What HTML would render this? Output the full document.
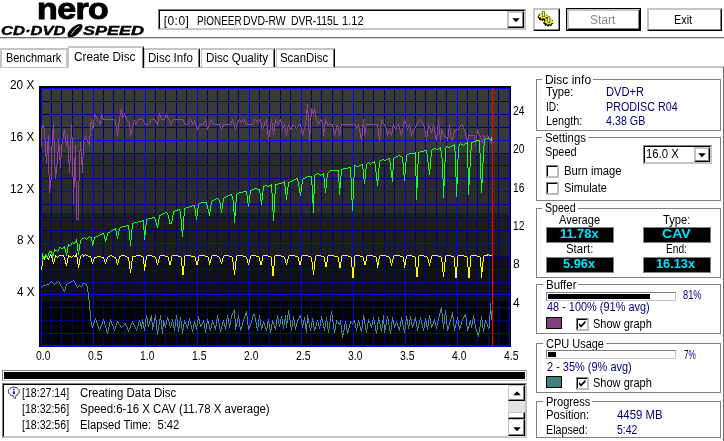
<!DOCTYPE html>
<html><head><meta charset="utf-8"><title>Nero CD-DVD Speed</title>
<style>
html,body{margin:0;padding:0;background:#fff;}
body{will-change:transform;width:724px;height:441px;position:relative;overflow:hidden;font-family:"Liberation Sans",sans-serif;font-size:12px;color:#000;}
.a{position:absolute;white-space:nowrap;line-height:12px;}
.b{color:#000084;}
.c{color:#00e4ff;}
.box{position:absolute;box-sizing:border-box;}
.grp{position:absolute;box-sizing:border-box;border:1px solid #808080;}
.lcd{position:absolute;box-sizing:border-box;background:#000;border:1px solid #808080;}
.chk{position:absolute;box-sizing:border-box;width:13px;height:13px;border-top:1px solid #808080;border-left:1px solid #808080;border-right:2px solid #bebebe;border-bottom:2px solid #bebebe;background:#fff;}
.chk i{position:absolute;left:0;top:0;width:9px;height:9px;border-top:1px solid #000;border-left:1px solid #000;}
</style></head><body>
<div class="a" id="nero" style="left:37px;top:-9px;font-size:30px;line-height:36px;font-weight:bold;letter-spacing:-0.5px;transform-origin:0 0;transform:scaleX(1.13);-webkit-text-stroke:1px #000;">nero</div>
<div class="a" id="cd1" style="left:1px;top:25px;font-size:12px;line-height:12px;font-weight:bold;font-style:italic;transform-origin:0 0;transform:scaleX(1.38);-webkit-text-stroke:0.4px #000;">CD·DVD</div>
<div class="a" id="cd2" style="left:83px;top:25px;font-size:12px;line-height:12px;font-weight:bold;font-style:italic;transform-origin:0 0;transform:scaleX(1.5);-webkit-text-stroke:0.4px #000;">SPEED</div>
<svg class="a" style="left:65px;top:23px" width="20" height="15" viewBox="0 0 20 15"><ellipse cx="10" cy="7.7" rx="9.2" ry="4.2" transform="rotate(-40 10 7.7)" fill="#000"/><path d="M6.2 11.5 Q9 6 14.5 3.2" stroke="#fff" stroke-width="0.9" fill="none"/></svg>
<div class="box" style="left:0;top:37px;width:724px;height:1px;background:#707070"></div>
<div class="box" style="left:0;top:38px;width:724px;height:1px;background:#d4d4d4"></div>
<div class="box" style="left:158px;top:9px;width:368px;height:21px;border-top:1px solid #808080;border-left:1px solid #808080;border-right:1px solid #c4c4c4;border-bottom:1px solid #c4c4c4;"></div><div class="box" style="left:159px;top:10px;width:366px;height:19px;border-top:1px solid #000;border-left:1px solid #000;border-right:1px solid #c4c4c4;border-bottom:1px solid #c4c4c4;"></div>
<div class="a " style="left:163.7px;top:15px;letter-spacing:0.45px;">[0:0]</div>
<div class="a " style="left:196.9px;top:15px;transform-origin:0.0px 0;transform:scaleX(0.826);">PIONEER</div>
<div class="a " style="left:243.4px;top:15px;transform-origin:0.0px 0;transform:scaleX(0.870);">DVD-RW</div>
<div class="a " style="left:291.4px;top:15px;transform-origin:0.0px 0;transform:scaleX(0.861);">DVR-115L</div>
<div class="a " style="left:342.1px;top:15px;transform-origin:0.0px 0;transform:scaleX(0.923);">1.12</div>
<div class="box" style="left:507px;top:11px;width:17px;height:17px;border-top:2px solid #c4c4c4;border-left:2px solid #c4c4c4;border-right:1px solid #000;border-bottom:1px solid #000;background:#fff"></div><div class="box" style="left:508px;top:12px;width:15px;height:15px;border-right:1px solid #808080;border-bottom:1px solid #808080;"></div>
<svg class="a" style="left:511.5px;top:17.5px" width="8" height="5"><path d="M0.2 0.3h7.6l-3.8 4z" fill="#000"/></svg>
<div class="box" style="left:533px;top:8px;width:27px;height:23px;border-top:2px solid #c4c4c4;border-left:2px solid #c4c4c4;border-right:1px solid #000;border-bottom:1px solid #000;background:#fff"></div><div class="box" style="left:534px;top:9px;width:25px;height:21px;border-right:1px solid #808080;border-bottom:1px solid #808080;"></div>
<svg class="a" style="left:536px;top:10px" width="22" height="19" viewBox="0 0 22 19">
<g transform="translate(7.2,5.8)">
<ellipse rx="4.3" ry="3.2" cx="-0.5" cy="1.1" fill="#000" stroke="#000" stroke-width="1.6" stroke-dasharray="1.5 1.1"/>
<ellipse rx="3.5" ry="2.5" fill="#f4f400" stroke="#f4f400" stroke-width="1.8" stroke-dasharray="1.4 1.2"/>
<rect x="-0.9" y="-4.6" width="2" height="5.6" fill="#c8c8c8" stroke="#303030" stroke-width="0.6"/>
<rect x="-0.4" y="-4" width="0.7" height="4.5" fill="#fff"/>
</g>
<g transform="translate(12.8,11.4)">
<ellipse rx="4.3" ry="3.2" cx="-0.5" cy="1.1" fill="#000" stroke="#000" stroke-width="1.6" stroke-dasharray="1.5 1.1"/>
<ellipse rx="3.5" ry="2.5" fill="#f4f400" stroke="#f4f400" stroke-width="1.8" stroke-dasharray="1.4 1.2"/>
<rect x="-0.9" y="-4.6" width="2" height="5.6" fill="#c8c8c8" stroke="#303030" stroke-width="0.6"/>
<rect x="-0.4" y="-4" width="0.7" height="4.5" fill="#fff"/>
</g>
</svg>
<div class="box" style="left:566px;top:8px;width:75px;height:23px;border:1px solid #000;"></div>
<div class="box" style="left:567px;top:9px;width:73px;height:21px;border-top:2px solid #c4c4c4;border-left:2px solid #c4c4c4;border-right:1px solid #000;border-bottom:1px solid #000;background:#fff"></div><div class="box" style="left:568px;top:10px;width:71px;height:19px;border-right:1px solid #808080;border-bottom:1px solid #808080;"></div>
<div class="a " style="left:590.2px;top:14px;transform-origin:0.0px 0;transform:scaleX(0.999);color:#888;">Start</div>
<div class="box" style="left:647px;top:8px;width:75px;height:23px;border-top:2px solid #c4c4c4;border-left:2px solid #c4c4c4;border-right:1px solid #000;border-bottom:1px solid #000;background:#fff"></div><div class="box" style="left:648px;top:9px;width:73px;height:21px;border-right:1px solid #808080;border-bottom:1px solid #808080;"></div>
<div class="a " style="left:674.4px;top:14px;transform-origin:0.0px 0;transform:scaleX(0.903);">Exit</div>
<div class="box" style="left:0;top:66px;width:724px;height:2px;background:#c4c4c4"></div>
<div class="box" style="left:723px;top:67px;width:1px;height:374px;background:#6c6c6c"></div>
<div class="box" style="left:0px;top:48px;width:68px;height:19px;border-top:2px solid #c4c4c4;border-left:2px solid #c4c4c4;border-right:1px solid #c4c4c4;background:#fff"></div><div class="box" style="left:66px;top:50px;width:1px;height:17px;background:#c4c4c4"></div>
<div class="a " style="left:6.1px;top:52px;transform-origin:0.0px 0;transform:scaleX(0.911);">Benchmark</div>
<div class="box" style="left:68px;top:46px;width:76px;height:22px;border-top:2px solid #c4c4c4;border-left:1px solid #c4c4c4;border-right:1px solid #000;background:#fff"></div><div class="box" style="left:142px;top:48px;width:1px;height:20px;background:#808080"></div>
<div class="a " style="left:74.1px;top:51px;transform-origin:0.0px 0;transform:scaleX(0.980);">Create Disc</div>
<div class="box" style="left:144px;top:48px;width:56px;height:19px;border-top:2px solid #c4c4c4;border-left:1px solid #c4c4c4;border-right:1px solid #000;background:#fff"></div><div class="box" style="left:198px;top:50px;width:1px;height:17px;background:#808080"></div>
<div class="a " style="left:148.3px;top:52px;transform-origin:0.0px 0;transform:scaleX(0.960);">Disc Info</div>
<div class="box" style="left:201px;top:48px;width:74px;height:19px;border-top:2px solid #c4c4c4;border-left:1px solid #c4c4c4;border-right:1px solid #000;background:#fff"></div><div class="box" style="left:273px;top:50px;width:1px;height:17px;background:#808080"></div>
<div class="a " style="left:206.0px;top:52px;transform-origin:0.0px 0;transform:scaleX(0.969);">Disc Quality</div>
<div class="box" style="left:276px;top:48px;width:59px;height:19px;border-top:2px solid #c4c4c4;border-left:1px solid #c4c4c4;border-right:1px solid #000;background:#fff"></div><div class="box" style="left:333px;top:50px;width:1px;height:17px;background:#808080"></div>
<div class="a " style="left:280.0px;top:52px;transform-origin:0.0px 0;transform:scaleX(0.950);">ScanDisc</div>
<svg class="a" style="left:39px;top:86px" width="473" height="262" viewBox="0 0 473 262" shape-rendering="crispEdges">
<rect x="2" y="2" width="469" height="65" fill="#3a3a3a"/>
<rect x="2" y="67" width="469" height="60" fill="#2b2b2b"/>
<rect x="2" y="127" width="469" height="43" fill="#1d1d1d"/>
<rect x="2" y="170" width="469" height="45" fill="#111111"/>
<rect x="2" y="215" width="469" height="46" fill="#050505"/>
<rect x="12" y="2" width="1" height="259" fill="#000088"/>
<rect x="22" y="2" width="1" height="259" fill="#000088"/>
<rect x="33" y="2" width="1" height="259" fill="#000088"/>
<rect x="43" y="2" width="1" height="259" fill="#000088"/>
<rect x="64" y="2" width="1" height="259" fill="#000088"/>
<rect x="74" y="2" width="1" height="259" fill="#000088"/>
<rect x="85" y="2" width="1" height="259" fill="#000088"/>
<rect x="95" y="2" width="1" height="259" fill="#000088"/>
<rect x="116" y="2" width="1" height="259" fill="#000088"/>
<rect x="126" y="2" width="1" height="259" fill="#000088"/>
<rect x="137" y="2" width="1" height="259" fill="#000088"/>
<rect x="147" y="2" width="1" height="259" fill="#000088"/>
<rect x="168" y="2" width="1" height="259" fill="#000088"/>
<rect x="178" y="2" width="1" height="259" fill="#000088"/>
<rect x="189" y="2" width="1" height="259" fill="#000088"/>
<rect x="199" y="2" width="1" height="259" fill="#000088"/>
<rect x="220" y="2" width="1" height="259" fill="#000088"/>
<rect x="230" y="2" width="1" height="259" fill="#000088"/>
<rect x="241" y="2" width="1" height="259" fill="#000088"/>
<rect x="251" y="2" width="1" height="259" fill="#000088"/>
<rect x="272" y="2" width="1" height="259" fill="#000088"/>
<rect x="282" y="2" width="1" height="259" fill="#000088"/>
<rect x="293" y="2" width="1" height="259" fill="#000088"/>
<rect x="303" y="2" width="1" height="259" fill="#000088"/>
<rect x="324" y="2" width="1" height="259" fill="#000088"/>
<rect x="334" y="2" width="1" height="259" fill="#000088"/>
<rect x="345" y="2" width="1" height="259" fill="#000088"/>
<rect x="355" y="2" width="1" height="259" fill="#000088"/>
<rect x="376" y="2" width="1" height="259" fill="#000088"/>
<rect x="386" y="2" width="1" height="259" fill="#000088"/>
<rect x="397" y="2" width="1" height="259" fill="#000088"/>
<rect x="407" y="2" width="1" height="259" fill="#000088"/>
<rect x="428" y="2" width="1" height="259" fill="#000088"/>
<rect x="438" y="2" width="1" height="259" fill="#000088"/>
<rect x="449" y="2" width="1" height="259" fill="#000088"/>
<rect x="459" y="2" width="1" height="259" fill="#000088"/>
<rect x="2" y="247" width="469" height="1" fill="#000088"/>
<rect x="2" y="234" width="469" height="1" fill="#000088"/>
<rect x="2" y="221" width="469" height="1" fill="#000088"/>
<rect x="2" y="196" width="469" height="1" fill="#000088"/>
<rect x="2" y="183" width="469" height="1" fill="#000088"/>
<rect x="2" y="170" width="469" height="1" fill="#000088"/>
<rect x="2" y="144" width="469" height="1" fill="#000088"/>
<rect x="2" y="131" width="469" height="1" fill="#000088"/>
<rect x="2" y="118" width="469" height="1" fill="#000088"/>
<rect x="2" y="92" width="469" height="1" fill="#000088"/>
<rect x="2" y="79" width="469" height="1" fill="#000088"/>
<rect x="2" y="67" width="469" height="1" fill="#000088"/>
<rect x="2" y="41" width="469" height="1" fill="#000088"/>
<rect x="2" y="28" width="469" height="1" fill="#000088"/>
<rect x="2" y="15" width="469" height="1" fill="#000088"/>
<rect x="2" y="2" width="1" height="259" fill="#0000ff"/>
<rect x="54" y="2" width="1" height="259" fill="#0000ff"/>
<rect x="106" y="2" width="1" height="259" fill="#0000ff"/>
<rect x="158" y="2" width="1" height="259" fill="#0000ff"/>
<rect x="210" y="2" width="1" height="259" fill="#0000ff"/>
<rect x="262" y="2" width="1" height="259" fill="#0000ff"/>
<rect x="314" y="2" width="1" height="259" fill="#0000ff"/>
<rect x="366" y="2" width="1" height="259" fill="#0000ff"/>
<rect x="418" y="2" width="1" height="259" fill="#0000ff"/>
<rect x="470" y="2" width="1" height="259" fill="#0000ff"/>
<rect x="2" y="260" width="469" height="1" fill="#0000ff"/>
<rect x="2" y="208" width="469" height="1" fill="#0000ff"/>
<rect x="2" y="157" width="469" height="1" fill="#0000ff"/>
<rect x="2" y="105" width="469" height="1" fill="#0000ff"/>
<rect x="2" y="54" width="469" height="1" fill="#0000ff"/>
<rect x="2" y="2" width="469" height="1" fill="#0000ff"/>
<rect x="0" y="0" width="472" height="2" fill="#000"/>
<rect x="0" y="0" width="2" height="261" fill="#000"/>
<rect x="471" y="1" width="1" height="260" fill="#000"/>
<rect x="2" y="2" width="469" height="1" fill="#00f"/>
<rect x="2" y="2" width="1" height="259" fill="#00f"/>
<rect x="470" y="2" width="1" height="259" fill="#00f"/>
<rect x="2" y="259" width="469" height="2" fill="#00f"/>
<g shape-rendering="crispEdges">
<path fill="#468c8c" d="M2 201h1v1h-1zM3 200h1v1h-1zM4 199h3v1h-3zM7 198h3v1h-3zM10 197h1v1h-1zM11 196h1v1h-1zM12 195h1v1h-1zM13 196h1v1h-1zM14 197h1v1h-1zM15 198h1v1h-1zM16 197h1v1h-1zM17 196h2v1h-2zM19 195h1v1h-1zM20 196h1v2h-1zM21 198h1v2h-1zM22 200h1v1h-1zM23 201h1v2h-1zM24 203h1v1h-1zM24 204h2v1h-2zM25 205h1v1h-1zM26 200h1v4h-1zM27 198h1v2h-1zM28 197h2v1h-2zM30 196h2v1h-2zM32 195h2v1h-2zM34 194h1v1h-1zM35 195h1v2h-1zM36 197h1v2h-1zM37 199h1v2h-1zM38 201h1v1h-1zM39 200h1v1h-1zM40 199h1v1h-1zM41 200h2v1h-2zM43 198h1v2h-1zM44 197h2v1h-2zM46 198h2v1h-2zM47 199h1v1h-1zM48 200h1v6h-1zM49 206h1v8h-1zM50 214h1v10h-1zM51 224h1v11h-1zM52 235h1v5h-1zM52 240h2v1h-2zM53 241h1v1h-1zM54 237h1v3h-1zM55 234h1v3h-1zM56 232h1v2h-1zM57 234h1v3h-1zM58 237h1v3h-1zM59 240h1v3h-1zM60 243h1v2h-1zM61 240h1v3h-1zM62 238h1v2h-1zM63 235h1v3h-1zM64 233h1v2h-1zM65 235h1v4h-1zM66 239h1v3h-1zM67 242h1v3h-1zM67 245h2v1h-2zM68 246h1v2h-1zM69 241h1v4h-1zM70 236h1v5h-1zM71 233h1v2h-1zM71 235h2v1h-2zM72 236h1v2h-1zM73 238h1v2h-1zM74 240h1v3h-1zM75 243h1v2h-1zM76 240h1v3h-1zM77 237h1v3h-1zM78 235h1v1h-1zM78 236h2v1h-2zM79 237h1v1h-1zM80 238h1v1h-1zM81 239h1v2h-1zM82 241h1v1h-1zM83 240h1v1h-1zM84 239h1v1h-1zM85 238h2v1h-2zM86 237h1v1h-1zM87 239h1v2h-1zM88 241h1v3h-1zM89 244h1v2h-1zM90 242h1v2h-1zM91 239h1v3h-1zM92 237h1v2h-1zM93 235h1v2h-1zM94 237h1v2h-1zM95 239h1v2h-1zM96 241h1v2h-1zM97 243h1v2h-1zM98 240h1v3h-1zM99 236h1v4h-1zM100 234h1v2h-1zM101 236h1v2h-1zM101 238h2v1h-2zM101 239h2v1h-2zM102 240h1v3h-1zM103 233h1v3h-1zM103 236h2v1h-2zM103 237h2v1h-2zM104 238h1v3h-1zM104 241h2v1h-2zM105 242h1v3h-1zM106 233h1v8h-1zM107 229h1v3h-1zM107 232h2v1h-2zM108 233h1v5h-1zM109 238h2v1h-2zM109 239h1v2h-1zM110 235h1v3h-1zM111 231h2v1h-2zM111 232h2v1h-2zM111 233h2v1h-2zM111 234h2v1h-2zM112 229h1v2h-1zM112 235h1v1h-1zM113 236h1v1h-1zM113 237h2v1h-2zM113 238h2v1h-2zM113 239h2v1h-2zM113 240h2v1h-2zM113 241h1v3h-1zM115 232h2v1h-2zM115 233h2v1h-2zM115 234h1v3h-1zM116 229h1v3h-1zM117 234h1v10h-1zM118 244h2v1h-2zM118 245h1v4h-1zM119 239h1v5h-1zM120 233h2v1h-2zM120 234h1v5h-1zM121 229h1v4h-1zM122 234h1v7h-1zM122 241h2v1h-2zM122 242h2v1h-2zM123 243h1v5h-1zM124 234h1v2h-1zM124 236h2v1h-2zM124 237h2v1h-2zM124 238h2v1h-2zM124 239h3v1h-3zM124 240h1v1h-1zM126 240h1v2h-1zM127 234h1v5h-1zM128 231h1v2h-1zM128 233h2v1h-2zM129 234h1v2h-1zM130 236h1v4h-1zM131 240h1v2h-1zM132 236h1v4h-1zM133 233h1v3h-1zM134 236h1v5h-1zM134 241h2v1h-2zM135 242h1v3h-1zM136 233h1v8h-1zM137 229h1v4h-1zM138 233h1v8h-1zM139 241h2v1h-2zM139 242h1v4h-1zM140 235h1v6h-1zM141 231h1v4h-1zM142 235h1v8h-1zM143 243h2v1h-2zM143 244h1v4h-1zM144 238h1v5h-1zM145 234h1v2h-1zM145 236h2v1h-2zM145 237h2v1h-2zM147 238h1v2h-1zM147 240h2v1h-2zM148 241h1v2h-1zM149 235h1v5h-1zM150 232h1v3h-1zM151 235h1v4h-1zM152 239h1v4h-1zM153 243h1v3h-1zM154 238h1v5h-1zM155 235h1v2h-1zM155 237h2v1h-2zM156 238h1v2h-1zM156 240h2v1h-2zM157 241h1v3h-1zM158 234h1v6h-1zM159 230h1v3h-1zM159 233h2v1h-2zM160 234h1v4h-1zM161 238h2v1h-2zM161 239h2v1h-2zM161 240h1v1h-1zM163 236h2v1h-2zM163 237h1v1h-1zM164 234h1v2h-1zM165 237h1v6h-1zM166 243h1v4h-1zM167 237h1v6h-1zM168 233h1v2h-1zM168 235h2v1h-2zM168 236h2v1h-2zM169 237h1v2h-1zM170 239h1v3h-1zM170 242h2v1h-2zM171 243h1v2h-1zM172 237h1v5h-1zM173 234h1v2h-1zM173 236h2v1h-2zM174 237h1v2h-1zM175 239h1v1h-1zM175 240h2v1h-2zM175 241h2v1h-2zM176 242h1v2h-1zM177 233h1v7h-1zM178 229h1v3h-1zM178 232h2v1h-2zM179 233h1v4h-1zM180 237h1v6h-1zM181 243h2v1h-2zM181 244h1v2h-1zM182 240h1v3h-1zM183 236h2v1h-2zM183 237h1v3h-1zM184 234h1v2h-1zM185 237h1v3h-1zM185 240h2v1h-2zM186 241h1v3h-1zM187 233h1v7h-1zM188 229h1v3h-1zM188 232h2v1h-2zM189 233h1v5h-1zM190 238h2v1h-2zM190 239h1v3h-1zM191 233h1v5h-1zM192 229h1v4h-1zM193 227h1v2h-1zM194 225h2v1h-2zM194 226h2v1h-2zM195 223h1v2h-1zM195 227h1v6h-1zM196 233h1v4h-1zM196 237h2v1h-2zM196 238h2v1h-2zM196 239h2v1h-2zM196 240h2v1h-2zM196 241h1v3h-1zM198 232h2v1h-2zM198 233h1v4h-1zM199 229h1v3h-1zM200 233h1v8h-1zM201 241h2v1h-2zM201 242h2v1h-2zM201 243h1v2h-1zM202 240h1v1h-1zM203 236h1v4h-1zM204 233h1v3h-1zM205 230h1v3h-1zM206 227h2v1h-2zM206 228h2v1h-2zM206 229h2v1h-2zM207 225h1v2h-1zM208 230h1v9h-1zM209 239h1v1h-1zM209 240h2v1h-2zM209 241h2v1h-2zM209 242h1v2h-1zM211 237h1v3h-1zM212 234h1v3h-1zM213 230h1v4h-1zM214 228h2v1h-2zM214 229h2v1h-2zM215 230h1v1h-1zM216 231h1v5h-1zM217 236h1v5h-1zM217 241h2v1h-2zM218 242h1v3h-1zM219 233h1v8h-1zM220 229h1v4h-1zM221 233h1v7h-1zM222 240h2v1h-2zM222 241h2v1h-2zM222 242h1v2h-1zM223 238h1v2h-1zM224 235h1v2h-1zM224 237h2v1h-2zM225 238h1v2h-1zM226 240h1v2h-1zM226 242h2v1h-2zM227 243h1v2h-1zM228 236h2v1h-2zM228 237h1v5h-1zM229 233h1v3h-1zM230 237h1v6h-1zM231 243h2v1h-2zM231 244h1v3h-1zM232 238h1v5h-1zM233 234h1v2h-1zM233 236h2v1h-2zM233 237h2v1h-2zM234 238h1v1h-1zM235 239h1v1h-1zM235 240h2v1h-2zM235 241h2v1h-2zM236 242h1v2h-1zM237 233h1v7h-1zM238 229h1v3h-1zM238 232h2v1h-2zM239 233h1v5h-1zM240 238h1v3h-1zM241 233h1v5h-1zM242 230h1v3h-1zM243 233h1v6h-1zM244 239h1v4h-1zM245 233h2v1h-2zM245 234h2v1h-2zM245 235h1v4h-1zM246 229h1v4h-1zM247 235h2v1h-2zM247 236h2v1h-2zM247 237h1v5h-1zM248 229h1v6h-1zM249 224h1v4h-1zM249 228h2v1h-2zM250 229h1v5h-1zM251 234h1v7h-1zM252 241h1v4h-1zM253 234h1v7h-1zM254 230h1v4h-1zM255 234h1v6h-1zM256 240h2v1h-2zM256 241h1v3h-1zM257 237h1v3h-1zM258 234h1v3h-1zM259 232h1v2h-1zM260 230h2v1h-2zM260 231h2v1h-2zM261 229h1v1h-1zM262 232h1v6h-1zM263 238h2v1h-2zM263 239h1v3h-1zM264 234h2v1h-2zM264 235h1v3h-1zM265 231h1v3h-1zM266 235h1v3h-1zM266 238h2v1h-2zM266 239h2v1h-2zM266 240h2v1h-2zM266 241h2v1h-2zM266 242h2v1h-2zM267 243h1v4h-1zM268 229h1v3h-1zM268 232h2v1h-2zM268 233h2v1h-2zM268 234h2v1h-2zM268 235h2v1h-2zM268 236h2v1h-2zM268 237h1v1h-1zM270 237h1v5h-1zM271 242h1v3h-1zM272 236h1v6h-1zM273 232h1v3h-1zM273 235h2v1h-2zM274 236h1v5h-1zM275 241h2v1h-2zM275 242h2v1h-2zM275 243h1v2h-1zM276 240h1v1h-1zM277 236h1v4h-1zM278 234h1v2h-1zM279 236h1v4h-1zM280 240h1v3h-1zM281 234h1v6h-1zM282 230h1v3h-1zM282 233h2v1h-2zM283 234h1v3h-1zM284 237h1v4h-1zM284 241h2v1h-2zM285 242h1v3h-1zM286 235h1v6h-1zM287 231h1v4h-1zM288 235h1v8h-1zM289 243h1v4h-1zM290 236h1v7h-1zM291 229h1v7h-1zM292 225h1v4h-1zM293 229h1v7h-1zM294 236h1v7h-1zM295 243h2v1h-2zM295 244h1v3h-1zM296 238h1v5h-1zM297 234h1v1h-1zM297 235h2v1h-2zM297 236h1v2h-1zM299 236h1v1h-1zM299 237h3v1h-3zM300 238h2v1h-2zM301 234h1v3h-1zM302 239h1v8h-1zM303 247h2v1h-2zM303 248h2v1h-2zM303 249h1v3h-1zM304 244h1v3h-1zM305 238h1v6h-1zM306 235h1v3h-1zM307 238h1v6h-1zM308 244h2v1h-2zM308 245h2v1h-2zM308 246h1v2h-1zM309 242h1v2h-1zM310 238h1v4h-1zM311 235h1v1h-1zM311 236h2v1h-2zM311 237h1v1h-1zM313 237h1v1h-1zM314 235h2v1h-2zM314 236h2v1h-2zM315 234h1v1h-1zM316 237h1v5h-1zM317 242h1v3h-1zM318 237h1v5h-1zM319 234h1v2h-1zM319 236h2v1h-2zM320 237h1v3h-1zM321 240h1v2h-1zM321 242h2v1h-2zM321 243h2v1h-2zM322 244h1v2h-1zM323 234h1v8h-1zM324 229h1v3h-1zM324 232h2v1h-2zM324 233h2v1h-2zM325 234h1v4h-1zM326 238h1v5h-1zM326 243h2v1h-2zM327 244h1v3h-1zM328 237h1v6h-1zM329 233h1v2h-1zM329 235h2v1h-2zM329 236h2v1h-2zM331 237h1v2h-1zM331 239h2v1h-2zM332 240h1v2h-1zM333 234h1v5h-1zM334 231h1v3h-1zM335 234h1v5h-1zM336 239h1v5h-1zM336 244h2v1h-2zM337 245h1v3h-1zM338 236h1v8h-1zM339 231h1v3h-1zM339 234h2v1h-2zM339 235h2v1h-2zM340 236h1v2h-1zM341 238h1v4h-1zM341 242h2v1h-2zM342 243h1v3h-1zM343 234h2v1h-2zM343 235h2v1h-2zM343 236h2v1h-2zM343 237h2v1h-2zM343 238h1v4h-1zM344 229h1v5h-1zM345 238h1v1h-1zM345 239h2v1h-2zM345 240h2v1h-2zM345 241h2v1h-2zM345 242h2v1h-2zM345 243h2v1h-2zM345 244h1v3h-1zM347 233h1v6h-1zM348 230h1v3h-1zM349 233h1v6h-1zM350 239h1v5h-1zM350 244h2v1h-2zM351 245h1v3h-1zM352 236h1v8h-1zM353 231h1v3h-1zM353 234h2v1h-2zM353 235h2v1h-2zM354 236h1v3h-1zM355 239h2v1h-2zM355 240h1v2h-1zM356 237h1v2h-1zM357 235h1v2h-1zM358 237h1v3h-1zM359 240h1v1h-1zM359 241h2v1h-2zM359 242h2v1h-2zM360 243h1v2h-1zM361 235h1v6h-1zM362 231h1v3h-1zM362 234h2v1h-2zM363 235h1v4h-1zM364 239h1v4h-1zM364 243h2v1h-2zM365 244h1v3h-1zM366 235h1v8h-1zM367 230h1v3h-1zM367 233h2v1h-2zM367 234h2v1h-2zM368 235h1v4h-1zM369 239h2v1h-2zM369 240h1v3h-1zM370 234h1v5h-1zM371 230h1v3h-1zM371 233h2v1h-2zM372 234h1v5h-1zM373 239h2v1h-2zM373 240h1v2h-1zM374 237h1v2h-1zM375 233h2v1h-2zM375 234h2v1h-2zM375 235h1v2h-1zM376 231h1v2h-1zM377 235h1v6h-1zM378 241h2v1h-2zM378 242h1v3h-1zM379 238h1v3h-1zM380 234h1v4h-1zM381 231h1v3h-1zM382 234h1v4h-1zM383 238h1v4h-1zM384 242h1v3h-1zM385 236h1v6h-1zM386 232h1v3h-1zM386 235h2v1h-2zM387 236h1v4h-1zM387 240h2v1h-2zM388 241h1v3h-1zM389 233h1v7h-1zM390 229h1v3h-1zM390 232h2v1h-2zM391 233h1v5h-1zM392 238h2v1h-2zM392 239h2v1h-2zM392 240h1v2h-1zM394 235h2v1h-2zM394 236h1v2h-1zM395 233h1v2h-1zM396 236h1v4h-1zM397 240h1v3h-1zM398 235h1v5h-1zM399 231h1v4h-1zM400 227h1v4h-1zM401 223h2v1h-2zM401 224h2v1h-2zM401 225h2v1h-2zM401 226h2v1h-2zM402 221h1v2h-1zM403 227h1v10h-1zM404 237h2v1h-2zM404 238h1v5h-1zM405 229h1v8h-1zM406 224h1v5h-1zM407 229h1v10h-1zM408 239h1v1h-1zM408 240h2v1h-2zM408 241h2v1h-2zM408 242h2v1h-2zM408 243h1v2h-1zM410 236h1v4h-1zM411 233h1v3h-1zM412 229h2v1h-2zM412 230h2v1h-2zM412 231h1v2h-1zM413 226h1v3h-1zM414 231h1v9h-1zM415 240h2v1h-2zM415 241h2v1h-2zM415 242h1v3h-1zM416 238h1v2h-1zM417 234h1v4h-1zM418 231h1v3h-1zM419 234h1v6h-1zM420 240h2v1h-2zM420 241h2v1h-2zM420 242h1v2h-1zM421 239h1v1h-1zM422 235h1v4h-1zM423 233h1v2h-1zM424 231h1v2h-1zM425 229h2v1h-2zM425 230h2v1h-2zM426 228h1v1h-1zM426 231h1v1h-1zM427 232h1v8h-1zM428 240h2v1h-2zM428 241h2v1h-2zM428 242h2v1h-2zM428 243h1v2h-1zM430 236h2v1h-2zM430 237h2v1h-2zM430 238h1v2h-1zM431 234h1v2h-1zM432 238h2v1h-2zM432 239h1v3h-1zM433 233h1v5h-1zM434 229h1v3h-1zM434 232h2v1h-2zM435 233h1v5h-1zM436 238h1v5h-1zM437 243h1v3h-1zM438 246h1v1h-1zM438 247h2v1h-2zM438 248h2v1h-2zM439 249h1v2h-1zM440 241h1v6h-1zM441 234h1v7h-1zM442 230h1v4h-1zM443 234h1v8h-1zM444 242h2v1h-2zM444 243h1v3h-1zM445 237h1v5h-1zM446 234h1v2h-1zM446 236h2v1h-2zM447 237h1v1h-1zM448 238h1v3h-1zM449 241h2v1h-2zM449 242h1v1h-1zM450 229h1v12h-1zM451 217h1v8h-1zM451 225h2v1h-2zM451 226h2v1h-2zM451 227h2v1h-2zM451 228h2v1h-2zM452 229h1v5h-1z"/>
<path fill="#904494" d="M2 42h1v19h-1zM3 38h1v2h-1zM3 40h2v1h-2zM3 41h2v1h-2zM5 42h1v12h-1zM6 54h1v14h-1zM6 68h2v1h-2zM6 69h2v1h-2zM7 70h1v7h-1zM8 55h2v1h-2zM8 56h2v1h-2zM8 57h2v1h-2zM8 58h2v1h-2zM8 59h2v1h-2zM8 60h2v1h-2zM8 61h2v1h-2zM8 62h2v1h-2zM8 63h2v1h-2zM8 64h2v1h-2zM8 65h2v1h-2zM8 66h2v1h-2zM8 67h2v1h-2zM9 49h1v6h-1zM9 68h1v20h-1zM10 88h1v6h-1zM10 94h2v1h-2zM10 95h2v1h-2zM10 96h2v1h-2zM10 97h2v1h-2zM10 98h2v1h-2zM10 99h2v1h-2zM10 100h2v1h-2zM10 101h2v1h-2zM10 102h2v1h-2zM10 103h1v4h-1zM12 60h1v34h-1zM13 44h2v1h-2zM13 45h2v1h-2zM13 46h2v1h-2zM13 47h2v1h-2zM13 48h2v1h-2zM13 49h2v1h-2zM13 50h2v1h-2zM13 51h2v1h-2zM13 52h2v1h-2zM13 53h2v1h-2zM13 54h1v6h-1zM14 38h1v6h-1zM15 54h1v27h-1zM16 81h2v1h-2zM16 82h2v1h-2zM16 83h2v1h-2zM16 84h2v1h-2zM16 85h2v1h-2zM16 86h2v1h-2zM16 87h2v1h-2zM16 88h1v5h-1zM17 79h1v2h-1zM18 66h1v13h-1zM19 53h1v7h-1zM19 60h2v1h-2zM19 61h2v1h-2zM19 62h2v1h-2zM19 63h2v1h-2zM19 64h2v1h-2zM19 65h2v1h-2zM20 66h1v5h-1zM20 71h2v1h-2zM20 72h2v1h-2zM20 73h2v1h-2zM21 74h1v8h-1zM22 58h1v13h-1zM23 52h1v6h-1zM24 46h2v1h-2zM24 47h2v1h-2zM24 48h1v4h-1zM25 43h1v3h-1zM26 48h1v7h-1zM26 55h3v1h-3zM27 56h2v1h-2zM27 57h2v1h-2zM27 58h2v1h-2zM27 59h1v2h-1zM28 49h1v6h-1zM29 59h1v17h-1zM29 76h2v1h-2zM30 77h1v10h-1zM31 52h1v24h-1zM32 38h1v13h-1zM32 51h2v1h-2zM33 52h1v39h-1zM34 91h3v1h-3zM34 92h3v1h-3zM34 93h3v1h-3zM34 94h3v1h-3zM34 95h3v1h-3zM34 96h2v1h-2zM34 97h2v1h-2zM34 98h2v1h-2zM34 99h2v1h-2zM34 100h2v1h-2zM34 101h1v17h-1zM35 72h2v1h-2zM35 73h2v1h-2zM35 74h2v1h-2zM35 75h2v1h-2zM35 76h2v1h-2zM35 77h2v1h-2zM35 78h2v1h-2zM35 79h2v1h-2zM35 80h2v1h-2zM35 81h2v1h-2zM35 82h2v1h-2zM35 83h2v1h-2zM35 84h2v1h-2zM35 85h2v1h-2zM35 86h2v1h-2zM35 87h2v1h-2zM35 88h2v1h-2zM35 89h2v1h-2zM35 90h2v1h-2zM36 59h1v13h-1zM37 96h1v37h-1zM37 133h3v1h-3zM39 95h1v38h-1zM40 65h1v30h-1zM41 55h1v8h-1zM41 63h2v1h-2zM41 64h2v1h-2zM42 65h1v6h-1zM42 71h2v1h-2zM42 72h2v1h-2zM42 73h2v1h-2zM42 74h2v1h-2zM42 75h2v1h-2zM42 76h2v1h-2zM42 77h2v1h-2zM42 78h2v1h-2zM43 79h1v8h-1zM44 54h1v17h-1zM45 51h1v3h-1zM46 49h1v2h-1zM47 51h1v3h-1zM48 54h1v2h-1zM49 56h2v1h-2zM49 57h2v1h-2zM50 50h1v6h-1zM50 58h1v2h-1zM51 37h2v1h-2zM51 38h1v12h-1zM52 33h1v4h-1zM53 38h2v1h-2zM53 39h2v1h-2zM53 40h2v1h-2zM53 41h2v1h-2zM53 42h1v2h-1zM54 34h1v4h-1zM55 28h1v1h-1zM55 29h2v1h-2zM55 30h2v1h-2zM55 31h1v3h-1zM57 31h1v2h-1zM58 33h1v2h-1zM59 35h1v1h-1zM60 36h2v1h-2zM60 37h2v1h-2zM61 34h1v2h-1zM61 38h1v1h-1zM62 28h1v2h-1zM62 30h2v1h-2zM62 31h2v1h-2zM62 32h1v2h-1zM64 32h1v1h-1zM64 33h11v1h-11zM75 34h1v2h-1zM76 36h1v4h-1zM77 40h1v5h-1zM77 45h2v1h-2zM78 46h1v4h-1zM79 37h1v8h-1zM80 30h1v7h-1zM81 25h2v1h-2zM81 26h2v1h-2zM81 27h1v3h-1zM82 22h1v3h-1zM83 27h1v2h-1zM83 29h2v1h-2zM83 30h2v1h-2zM83 31h1v1h-1zM85 27h1v2h-1zM86 29h1v3h-1zM87 32h1v2h-1zM88 34h1v1h-1zM89 35h1v2h-1zM90 37h1v6h-1zM91 43h1v1h-1zM91 44h2v1h-2zM91 45h2v1h-2zM91 46h2v1h-2zM91 47h2v1h-2zM91 48h1v2h-1zM93 40h1v4h-1zM94 36h1v4h-1zM95 34h1v2h-1zM96 36h2v1h-2zM96 37h2v1h-2zM96 38h1v1h-1zM98 34h1v2h-1zM99 33h5v1h-5zM104 34h1v2h-1zM105 36h1v2h-1zM106 38h4v1h-4zM110 36h1v2h-1zM111 34h1v2h-1zM112 33h4v1h-4zM116 34h1v2h-1zM117 36h2v1h-2zM117 37h2v1h-2zM118 38h1v1h-1zM119 30h1v6h-1zM120 27h1v2h-1zM120 29h2v1h-2zM121 30h1v2h-1zM122 32h1v1h-1zM122 33h4v1h-4zM125 32h1v1h-1zM126 29h1v3h-1zM127 27h1v2h-1zM128 29h1v3h-1zM129 32h1v2h-1zM130 34h1v3h-1zM131 37h2v1h-2zM131 38h1v1h-1zM132 36h1v1h-1zM133 34h1v2h-1zM134 33h10v1h-10zM144 34h1v2h-1zM145 36h1v2h-1zM146 38h3v1h-3zM149 36h1v2h-1zM150 34h1v2h-1zM151 33h1v1h-1zM152 34h1v2h-1zM153 36h1v1h-1zM153 37h2v1h-2zM154 38h1v1h-1zM155 34h1v2h-1zM155 36h2v1h-2zM156 37h1v2h-1zM157 39h1v3h-1zM158 42h2v1h-2zM158 43h1v1h-1zM159 41h1v1h-1zM160 39h1v2h-1zM161 38h4v1h-4zM164 37h1v1h-1zM165 35h2v1h-2zM165 36h1v1h-1zM166 33h1v2h-1zM167 36h1v5h-1zM168 41h2v1h-2zM168 42h1v2h-1zM169 39h1v2h-1zM170 35h1v4h-1zM171 33h1v1h-1zM171 34h2v1h-2zM172 35h1v1h-1zM173 36h1v2h-1zM174 38h7v1h-7zM180 39h1v1h-1zM181 40h1v2h-1zM182 42h1v2h-1zM183 40h1v2h-1zM184 38h8v1h-8zM184 39h1v1h-1zM191 37h1v1h-1zM192 35h1v2h-1zM193 33h1v2h-1zM194 35h1v3h-1zM195 38h1v4h-1zM196 42h1v2h-1zM197 38h1v4h-1zM198 36h1v2h-1zM199 34h1v2h-1zM200 33h1v1h-1zM201 34h1v2h-1zM202 36h1v1h-1zM203 34h1v2h-1zM204 33h1v1h-1zM205 34h1v2h-1zM206 36h1v2h-1zM207 38h7v1h-7zM214 36h1v2h-1zM215 34h1v2h-1zM216 33h1v1h-1zM217 34h1v2h-1zM218 36h1v1h-1zM219 34h2v1h-2zM219 35h1v1h-1zM220 33h1v1h-1zM221 35h1v3h-1zM222 38h1v4h-1zM223 42h1v2h-1zM224 40h1v2h-1zM225 37h1v3h-1zM226 35h2v1h-2zM226 36h2v1h-2zM227 33h1v2h-1zM227 37h1v2h-1zM228 39h1v10h-1zM229 49h2v1h-2zM229 50h2v1h-2zM229 51h1v4h-1zM230 44h1v5h-1zM231 37h1v7h-1zM232 33h1v4h-1zM233 37h1v8h-1zM234 45h1v4h-1zM235 37h1v8h-1zM236 33h1v2h-1zM236 35h2v1h-2zM236 36h2v1h-2zM238 37h2v1h-2zM238 38h1v1h-1zM239 36h1v1h-1zM240 34h2v1h-2zM240 35h2v1h-2zM241 33h1v1h-1zM242 36h1v5h-1zM243 41h2v1h-2zM243 42h1v2h-1zM244 40h2v1h-2zM245 38h1v2h-1zM246 41h1v6h-1zM247 47h1v3h-1zM248 41h1v6h-1zM249 38h1v2h-1zM249 40h2v1h-2zM250 41h1v1h-1zM251 42h2v1h-2zM251 43h1v1h-1zM252 41h1v1h-1zM253 39h1v2h-1zM254 38h1v1h-1zM255 39h1v1h-1zM256 40h1v2h-1zM257 42h1v1h-1zM258 41h1v1h-1zM259 39h1v2h-1zM260 38h2v1h-2zM261 39h1v2h-1zM262 41h1v6h-1zM263 47h2v1h-2zM263 48h1v2h-1zM264 44h1v3h-1zM265 40h1v4h-1zM266 34h1v6h-1zM267 24h2v1h-2zM267 25h2v1h-2zM267 26h2v1h-2zM267 27h1v7h-1zM268 18h1v6h-1zM269 27h1v18h-1zM270 45h2v1h-2zM270 46h2v1h-2zM270 47h1v8h-1zM271 31h1v14h-1zM272 22h1v2h-1zM272 24h2v1h-2zM272 25h2v1h-2zM272 26h3v1h-3zM272 27h1v4h-1zM274 27h1v2h-1zM275 22h1v3h-1zM275 25h2v1h-2zM276 26h1v5h-1zM277 31h1v4h-1zM278 35h1v2h-1zM279 37h1v2h-1zM280 35h1v2h-1zM281 33h1v1h-1zM281 34h2v1h-2zM282 35h1v1h-1zM283 36h1v7h-1zM284 43h2v1h-2zM284 44h2v1h-2zM284 45h2v1h-2zM284 46h1v4h-1zM285 38h1v5h-1zM286 33h1v2h-1zM286 35h2v1h-2zM286 36h2v1h-2zM286 37h1v1h-1zM288 37h1v1h-1zM288 38h6v1h-6zM293 39h1v2h-1zM294 41h1v6h-1zM295 47h2v1h-2zM295 48h1v2h-1zM296 44h1v3h-1zM297 40h2v1h-2zM297 41h1v3h-1zM298 38h1v2h-1zM299 41h1v6h-1zM300 47h1v3h-1zM301 41h1v6h-1zM302 38h14v1h-14zM302 39h1v2h-1zM316 39h1v2h-1zM317 41h2v1h-2zM317 42h1v1h-1zM318 40h2v1h-2zM319 38h1v2h-1zM320 41h1v5h-1zM321 46h1v3h-1zM321 49h2v1h-2zM321 50h2v1h-2zM321 51h2v1h-2zM322 52h1v3h-1zM323 39h2v1h-2zM323 40h2v1h-2zM323 41h1v8h-1zM324 33h1v6h-1zM325 41h2v1h-2zM325 42h2v1h-2zM325 43h2v1h-2zM325 44h2v1h-2zM325 45h2v1h-2zM325 46h2v1h-2zM325 47h1v3h-1zM327 38h12v1h-12zM327 39h1v2h-1zM338 39h1v3h-1zM339 42h1v7h-1zM339 49h2v1h-2zM340 50h1v5h-1zM341 39h1v10h-1zM342 33h1v1h-1zM342 34h2v1h-2zM342 35h2v1h-2zM342 36h1v3h-1zM344 36h1v2h-1zM345 38h1v2h-1zM346 40h1v2h-1zM347 42h1v4h-1zM348 46h2v1h-2zM348 47h2v1h-2zM348 48h1v2h-1zM349 45h1v1h-1zM350 43h1v2h-1zM351 45h1v2h-1zM351 47h2v1h-2zM352 48h1v2h-1zM353 41h1v6h-1zM354 38h1v2h-1zM354 40h2v1h-2zM355 41h1v1h-1zM356 42h2v1h-2zM356 43h1v1h-1zM357 41h1v1h-1zM358 39h2v1h-2zM358 40h1v1h-1zM359 38h1v1h-1zM360 40h1v4h-1zM361 44h1v3h-1zM361 47h2v1h-2zM362 48h1v2h-1zM363 42h1v5h-1zM364 36h1v6h-1zM365 33h1v2h-1zM365 35h2v1h-2zM366 36h1v2h-1zM367 38h1v4h-1zM368 42h1v2h-1zM369 40h2v1h-2zM369 41h1v1h-1zM370 38h1v2h-1zM371 41h1v6h-1zM372 47h2v1h-2zM372 48h1v2h-1zM373 46h1v1h-1zM374 44h1v2h-1zM375 42h1v2h-1zM376 40h1v2h-1zM377 38h1v2h-1zM378 37h1v1h-1zM379 35h1v2h-1zM380 34h1v1h-1zM381 33h1v1h-1zM382 34h1v2h-1zM383 36h1v2h-1zM384 38h1v2h-1zM385 40h1v5h-1zM386 45h1v6h-1zM387 51h1v4h-1zM388 43h1v8h-1zM389 38h1v2h-1zM389 40h2v1h-2zM389 41h2v1h-2zM389 42h1v1h-1zM391 42h1v3h-1zM392 45h1v2h-1zM393 41h1v4h-1zM394 38h1v3h-1zM395 41h1v5h-1zM396 46h1v3h-1zM396 49h2v1h-2zM396 50h2v1h-2zM396 51h2v1h-2zM397 52h1v3h-1zM398 39h1v10h-1zM399 33h1v6h-1zM400 39h1v10h-1zM401 49h1v6h-1zM402 43h1v2h-1zM402 45h2v1h-2zM402 46h2v1h-2zM402 47h2v1h-2zM402 48h1v1h-1zM404 48h1v2h-1zM405 50h2v1h-2zM407 51h2v1h-2zM407 52h2v1h-2zM408 53h1v2h-1zM409 43h2v1h-2zM409 44h1v7h-1zM410 38h1v5h-1zM411 44h1v7h-1zM412 51h1v1h-1zM412 52h2v1h-2zM413 53h1v2h-1zM414 47h1v5h-1zM415 44h2v1h-2zM415 45h1v2h-1zM417 43h3v1h-3zM420 41h1v2h-1zM421 39h1v2h-1zM422 38h1v1h-1zM423 39h1v2h-1zM424 41h1v2h-1zM425 43h1v3h-1zM426 46h1v4h-1zM427 50h1v3h-1zM427 53h2v1h-2zM428 54h1v2h-1zM429 49h7v1h-7zM429 50h1v3h-1zM435 50h1v4h-1zM436 54h2v1h-2zM436 55h2v1h-2zM436 56h1v4h-1zM437 48h1v6h-1zM438 43h1v2h-1zM438 45h2v1h-2zM438 46h2v1h-2zM438 47h2v1h-2zM440 48h1v2h-1zM441 50h1v3h-1zM442 53h1v1h-1zM442 54h2v1h-2zM442 55h2v1h-2zM443 56h1v2h-1zM444 49h1v1h-1zM444 50h2v1h-2zM444 51h1v3h-1zM446 51h1v1h-1zM447 50h1v1h-1zM448 49h1v1h-1zM449 50h1v2h-1zM450 52h1v2h-1zM451 54h1v2h-1zM452 56h1v2h-1z"/>
<path fill="#ffff00" d="M2 180h1v4h-1zM3 169h1v1h-1zM3 170h2v1h-2zM3 171h2v1h-2zM3 172h1v8h-1zM5 172h1v2h-1zM6 169h1v1h-1zM6 170h2v1h-2zM6 171h1v1h-1zM8 171h1v1h-1zM8 172h2v1h-2zM9 173h1v1h-1zM10 170h1v2h-1zM11 168h1v1h-1zM11 169h2v1h-2zM12 170h1v2h-1zM13 172h1v4h-1zM14 176h1v2h-1zM15 172h1v4h-1zM16 169h1v1h-1zM16 170h2v1h-2zM16 171h1v1h-1zM18 171h1v1h-1zM19 170h1v1h-1zM20 169h5v1h-5zM24 170h1v1h-1zM25 171h1v3h-1zM26 174h1v3h-1zM26 177h2v1h-2zM27 178h1v2h-1zM28 172h1v5h-1zM29 169h1v1h-1zM29 170h3v1h-3zM29 171h1v1h-1zM32 171h1v1h-1zM33 170h1v1h-1zM34 169h1v1h-1zM35 170h3v1h-3zM36 169h2v1h-2zM37 167h1v2h-1zM38 171h1v7h-1zM39 178h2v1h-2zM39 179h1v3h-1zM40 173h1v5h-1zM41 170h1v3h-1zM42 169h1v1h-1zM43 168h1v1h-1zM44 169h2v1h-2zM44 170h1v1h-1zM46 168h1v1h-1zM47 169h2v1h-2zM49 170h3v1h-3zM51 171h1v1h-1zM52 172h1v4h-1zM53 176h1v2h-1zM54 173h1v3h-1zM55 171h3v1h-3zM55 172h1v1h-1zM58 170h4v1h-4zM62 171h3v1h-3zM64 172h1v1h-1zM65 173h1v3h-1zM66 176h1v2h-1zM67 173h1v3h-1zM68 171h1v2h-1zM69 170h2v1h-2zM71 169h2v1h-2zM73 170h2v1h-2zM75 171h2v1h-2zM76 172h1v1h-1zM77 173h1v4h-1zM78 177h1v2h-1zM79 173h1v4h-1zM80 170h2v1h-2zM80 171h1v2h-1zM82 169h4v1h-4zM86 170h2v1h-2zM88 171h2v1h-2zM89 172h1v3h-1zM90 175h1v8h-1zM91 183h1v4h-1zM92 175h1v8h-1zM93 170h4v1h-4zM93 171h1v4h-1zM97 169h5v1h-5zM102 170h2v1h-2zM104 171h1v7h-1zM105 178h2v1h-2zM105 179h2v1h-2zM105 180h2v1h-2zM105 181h1v4h-1zM106 174h1v4h-1zM107 170h1v4h-1zM108 169h5v1h-5zM113 170h3v1h-3zM116 171h1v2h-1zM117 173h1v4h-1zM118 177h1v2h-1zM119 173h1v4h-1zM120 170h1v3h-1zM121 169h5v1h-5zM126 170h3v1h-3zM129 171h1v4h-1zM130 175h2v1h-2zM130 176h2v1h-2zM130 177h2v1h-2zM130 178h2v1h-2zM132 170h1v5h-1zM133 169h6v1h-6zM139 170h3v1h-3zM142 171h1v9h-1zM143 180h2v1h-2zM143 181h2v1h-2zM143 182h2v1h-2zM143 183h2v1h-2zM143 184h2v1h-2zM143 185h2v1h-2zM143 186h2v1h-2zM143 187h2v1h-2zM143 188h2v1h-2zM145 170h1v10h-1zM146 169h6v1h-6zM152 170h4v1h-4zM156 171h1v4h-1zM157 175h2v1h-2zM157 176h2v1h-2zM157 177h2v1h-2zM157 178h2v1h-2zM159 170h1v5h-1zM160 169h6v1h-6zM166 170h3v1h-3zM169 171h1v4h-1zM170 175h2v1h-2zM170 176h2v1h-2zM170 177h1v2h-1zM171 173h1v2h-1zM172 170h1v3h-1zM173 169h5v1h-5zM178 170h2v1h-2zM180 171h1v2h-1zM181 173h1v3h-1zM182 176h1v2h-1zM183 172h1v4h-1zM184 170h1v2h-1zM185 169h5v1h-5zM190 170h3v1h-3zM193 171h1v5h-1zM194 176h1v8h-1zM195 184h1v5h-1zM196 175h1v9h-1zM197 170h1v5h-1zM198 169h6v1h-6zM204 170h3v1h-3zM207 171h1v2h-1zM208 173h1v4h-1zM209 177h1v2h-1zM210 173h1v4h-1zM211 170h1v3h-1zM212 169h5v1h-5zM217 170h3v1h-3zM220 171h1v4h-1zM221 175h2v1h-2zM221 176h2v1h-2zM221 177h2v1h-2zM221 178h2v1h-2zM223 170h1v5h-1zM224 169h5v1h-5zM229 170h3v1h-3zM232 171h1v9h-1zM233 180h2v1h-2zM233 181h2v1h-2zM233 182h2v1h-2zM233 183h2v1h-2zM233 184h2v1h-2zM233 185h2v1h-2zM233 186h2v1h-2zM233 187h2v1h-2zM233 188h2v1h-2zM233 189h2v1h-2zM235 170h1v10h-1zM236 169h6v1h-6zM242 170h3v1h-3zM245 171h1v2h-1zM246 173h1v4h-1zM247 177h1v2h-1zM248 173h1v4h-1zM249 170h1v3h-1zM250 169h6v1h-6zM256 170h3v1h-3zM259 171h1v4h-1zM260 175h2v1h-2zM260 176h2v1h-2zM260 177h2v1h-2zM260 178h2v1h-2zM262 170h1v5h-1zM263 169h6v1h-6zM269 170h3v1h-3zM272 171h1v5h-1zM273 176h1v8h-1zM274 184h1v5h-1zM275 175h1v9h-1zM276 170h1v5h-1zM277 169h5v1h-5zM282 170h3v1h-3zM285 171h1v5h-1zM286 176h2v1h-2zM286 177h2v1h-2zM286 178h2v1h-2zM286 179h2v1h-2zM286 180h2v1h-2zM288 170h1v6h-1zM289 169h6v1h-6zM295 170h4v1h-4zM299 171h1v5h-1zM300 176h2v1h-2zM300 177h2v1h-2zM300 178h2v1h-2zM300 179h2v1h-2zM300 180h2v1h-2zM300 181h2v1h-2zM302 170h1v6h-1zM303 169h6v1h-6zM309 170h3v1h-3zM312 171h1v10h-1zM313 181h2v1h-2zM313 182h2v1h-2zM313 183h2v1h-2zM313 184h2v1h-2zM313 185h2v1h-2zM313 186h2v1h-2zM313 187h2v1h-2zM313 188h2v1h-2zM313 189h2v1h-2zM313 190h2v1h-2zM313 191h2v1h-2zM315 170h1v11h-1zM316 169h5v1h-5zM321 170h3v1h-3zM324 171h1v4h-1zM325 175h2v1h-2zM325 176h2v1h-2zM325 177h2v1h-2zM325 178h2v1h-2zM327 170h1v5h-1zM328 169h6v1h-6zM334 170h3v1h-3zM337 171h1v5h-1zM338 176h2v1h-2zM338 177h2v1h-2zM338 178h2v1h-2zM338 179h1v3h-1zM339 173h1v3h-1zM340 170h1v3h-1zM341 169h6v1h-6zM347 170h3v1h-3zM350 171h1v2h-1zM351 173h1v4h-1zM352 177h1v3h-1zM353 173h1v4h-1zM354 170h1v3h-1zM355 169h6v1h-6zM361 170h3v1h-3zM364 171h1v5h-1zM365 176h2v1h-2zM365 177h2v1h-2zM365 178h2v1h-2zM365 179h1v3h-1zM366 173h1v3h-1zM367 170h1v3h-1zM368 169h5v1h-5zM373 170h3v1h-3zM376 171h1v10h-1zM377 181h2v1h-2zM377 182h2v1h-2zM377 183h2v1h-2zM377 184h2v1h-2zM377 185h2v1h-2zM377 186h2v1h-2zM377 187h2v1h-2zM377 188h2v1h-2zM377 189h2v1h-2zM377 190h2v1h-2zM379 170h1v11h-1zM380 169h5v1h-5zM385 170h3v1h-3zM388 171h1v2h-1zM389 173h1v4h-1zM390 177h1v3h-1zM391 173h1v4h-1zM392 170h1v3h-1zM393 169h6v1h-6zM399 170h3v1h-3zM402 171h1v5h-1zM403 176h1v10h-1zM404 186h1v5h-1zM405 176h1v10h-1zM406 170h1v6h-1zM407 169h5v1h-5zM412 170h3v1h-3zM415 171h1v10h-1zM416 181h2v1h-2zM416 182h2v1h-2zM416 183h2v1h-2zM416 184h2v1h-2zM416 185h2v1h-2zM416 186h2v1h-2zM416 187h2v1h-2zM416 188h2v1h-2zM416 189h2v1h-2zM416 190h2v1h-2zM416 191h2v1h-2zM418 170h1v11h-1zM419 169h6v1h-6zM425 170h3v1h-3zM428 171h1v10h-1zM429 181h2v1h-2zM429 182h2v1h-2zM429 183h2v1h-2zM429 184h2v1h-2zM429 185h2v1h-2zM429 186h2v1h-2zM429 187h2v1h-2zM429 188h2v1h-2zM429 189h2v1h-2zM429 190h2v1h-2zM429 191h2v1h-2zM431 170h1v11h-1zM432 169h6v1h-6zM438 170h3v1h-3zM441 171h1v10h-1zM442 181h2v1h-2zM442 182h2v1h-2zM442 183h2v1h-2zM442 184h2v1h-2zM442 185h2v1h-2zM442 186h1v6h-1zM443 176h1v5h-1zM444 170h1v6h-1zM445 169h4v1h-4zM448 168h2v1h-2zM450 169h3v1h-3z"/>
<path fill="#18ff18" d="M3 167h1v3h-1zM3 170h3v1h-3zM3 171h3v1h-3zM3 172h2v1h-2zM3 173h1v2h-1zM6 168h1v1h-1zM6 169h2v1h-2zM7 170h2v1h-2zM8 171h1v1h-1zM9 167h1v3h-1zM10 165h3v1h-3zM10 166h1v1h-1zM12 166h1v2h-1zM13 168h2v1h-2zM13 169h2v1h-2zM13 170h1v2h-1zM14 166h1v2h-1zM15 163h1v1h-1zM15 164h3v1h-3zM15 165h1v1h-1zM18 165h1v1h-1zM19 163h1v2h-1zM20 161h2v1h-2zM20 162h1v1h-1zM22 162h2v1h-2zM24 161h2v1h-2zM25 160h1v1h-1zM25 162h1v1h-1zM26 163h1v4h-1zM27 167h1v3h-1zM28 161h1v6h-1zM29 158h1v1h-1zM29 159h3v1h-3zM29 160h1v1h-1zM32 157h1v2h-1zM33 156h1v1h-1zM34 157h2v1h-2zM36 155h2v1h-2zM36 156h2v1h-2zM37 153h1v2h-1zM38 157h1v8h-1zM39 165h1v4h-1zM40 158h1v7h-1zM41 154h1v4h-1zM42 153h1v1h-1zM43 152h2v1h-2zM45 151h1v1h-1zM46 152h1v1h-1zM47 153h1v1h-1zM48 152h1v1h-1zM49 151h1v1h-1zM50 150h1v1h-1zM51 151h2v1h-2zM52 152h1v3h-1zM53 155h2v1h-2zM53 156h2v1h-2zM53 157h2v1h-2zM53 158h1v2h-1zM54 154h1v1h-1zM55 151h2v1h-2zM55 152h1v2h-1zM57 150h2v1h-2zM59 149h2v1h-2zM61 148h2v1h-2zM63 147h2v1h-2zM64 148h1v1h-1zM65 149h1v4h-1zM66 153h2v1h-2zM66 154h1v2h-1zM67 150h1v3h-1zM68 147h1v3h-1zM69 146h2v1h-2zM71 145h1v1h-1zM72 144h2v1h-2zM74 143h3v1h-3zM76 142h1v1h-1zM76 144h1v1h-1zM77 145h1v5h-1zM78 150h1v3h-1zM79 145h1v5h-1zM80 142h1v3h-1zM81 141h2v1h-2zM83 140h4v1h-4zM87 139h3v1h-3zM89 140h1v4h-1zM90 144h1v10h-1zM91 154h1v6h-1zM92 143h1v11h-1zM93 137h2v1h-2zM93 138h1v5h-1zM95 136h4v1h-4zM99 135h4v1h-4zM103 134h2v1h-2zM104 135h1v9h-1zM105 144h2v1h-2zM105 145h2v1h-2zM105 146h2v1h-2zM105 147h2v1h-2zM105 148h2v1h-2zM105 149h1v5h-1zM106 139h1v5h-1zM107 133h2v1h-2zM107 134h1v5h-1zM109 132h4v1h-4zM113 131h3v1h-3zM115 132h1v1h-1zM116 133h1v3h-1zM117 136h1v3h-1zM117 139h2v1h-2zM118 140h1v2h-1zM119 133h1v6h-1zM120 129h2v1h-2zM120 130h1v3h-1zM122 128h2v1h-2zM124 127h2v1h-2zM126 126h2v1h-2zM128 127h1v2h-1zM129 129h1v4h-1zM130 133h1v4h-1zM130 137h3v1h-3zM132 135h1v2h-1zM133 129h1v6h-1zM134 125h2v1h-2zM134 126h1v3h-1zM136 124h3v1h-3zM139 123h2v1h-2zM140 124h1v1h-1zM141 125h1v8h-1zM142 133h1v11h-1zM142 144h2v1h-2zM143 145h1v6h-1zM144 130h1v14h-1zM145 122h2v1h-2zM145 123h1v7h-1zM147 121h3v1h-3zM150 120h3v1h-3zM153 119h3v1h-3zM155 120h1v3h-1zM156 123h1v7h-1zM157 130h1v4h-1zM158 122h1v8h-1zM159 118h1v4h-1zM160 117h2v1h-2zM162 116h6v1h-6zM167 117h1v2h-1zM168 119h1v4h-1zM169 123h1v3h-1zM169 126h2v1h-2zM170 127h1v3h-1zM171 119h1v7h-1zM172 115h1v4h-1zM173 114h2v1h-2zM175 113h2v1h-2zM177 112h2v1h-2zM179 113h1v1h-1zM180 114h1v3h-1zM181 117h1v6h-1zM182 123h1v4h-1zM183 116h1v7h-1zM184 112h1v4h-1zM185 111h2v1h-2zM187 110h2v1h-2zM189 109h2v1h-2zM191 108h2v1h-2zM192 109h1v1h-1zM193 110h1v4h-1zM194 114h1v12h-1zM195 126h2v1h-2zM195 127h2v1h-2zM195 128h2v1h-2zM195 129h2v1h-2zM195 130h1v7h-1zM196 116h1v10h-1zM197 108h1v8h-1zM198 107h2v1h-2zM200 106h4v1h-4zM204 105h4v1h-4zM207 106h1v3h-1zM208 109h1v8h-1zM209 117h1v4h-1zM210 109h1v8h-1zM211 104h2v1h-2zM211 105h1v4h-1zM213 103h2v1h-2zM215 102h3v1h-3zM218 103h3v1h-3zM220 104h1v3h-1zM221 107h1v7h-1zM221 114h2v1h-2zM222 115h1v4h-1zM223 105h1v9h-1zM224 100h2v1h-2zM224 101h1v4h-1zM226 99h2v1h-2zM228 100h2v1h-2zM230 99h3v1h-3zM232 98h1v1h-1zM232 100h1v7h-1zM233 107h1v18h-1zM234 125h2v1h-2zM234 126h1v9h-1zM235 108h1v17h-1zM236 98h3v1h-3zM236 99h1v9h-1zM239 97h4v1h-4zM243 96h3v1h-3zM245 95h1v1h-1zM245 97h1v3h-1zM246 100h1v9h-1zM247 109h1v5h-1zM248 101h1v8h-1zM249 96h2v1h-2zM249 97h1v4h-1zM251 95h2v1h-2zM253 94h2v1h-2zM255 93h2v1h-2zM257 92h2v1h-2zM258 93h1v2h-1zM259 95h1v6h-1zM260 101h1v5h-1zM260 106h2v1h-2zM261 107h1v3h-1zM262 98h1v8h-1zM263 93h1v5h-1zM264 92h2v1h-2zM266 91h2v1h-2zM268 90h5v1h-5zM272 91h1v8h-1zM273 99h1v9h-1zM273 108h2v1h-2zM273 109h2v1h-2zM273 110h2v1h-2zM273 111h2v1h-2zM273 112h2v1h-2zM273 113h2v1h-2zM273 114h2v1h-2zM273 115h2v1h-2zM273 116h2v1h-2zM274 117h1v10h-1zM275 89h1v19h-1zM276 88h2v1h-2zM278 87h2v1h-2zM280 88h1v1h-1zM281 89h1v1h-1zM282 88h3v1h-3zM284 87h1v1h-1zM284 89h1v3h-1zM285 92h1v10h-1zM286 102h1v5h-1zM287 92h1v10h-1zM288 87h1v5h-1zM289 86h1v1h-1zM290 85h1v1h-1zM291 84h9v1h-9zM299 85h1v11h-1zM300 96h2v1h-2zM300 97h2v1h-2zM300 98h2v1h-2zM300 99h2v1h-2zM300 100h2v1h-2zM300 101h2v1h-2zM300 102h1v7h-1zM301 90h1v6h-1zM302 83h2v1h-2zM302 84h1v6h-1zM304 82h5v1h-5zM309 81h3v1h-3zM311 82h1v10h-1zM312 92h1v21h-1zM312 113h2v1h-2zM313 114h1v11h-1zM314 91h1v22h-1zM315 79h2v1h-2zM315 80h1v11h-1zM317 80h3v1h-3zM320 79h2v1h-2zM322 78h2v1h-2zM323 79h1v4h-1zM324 83h1v10h-1zM325 93h1v5h-1zM326 83h1v10h-1zM327 78h1v5h-1zM328 77h1v1h-1zM329 76h1v1h-1zM330 77h1v1h-1zM331 78h1v1h-1zM332 77h1v1h-1zM333 76h3v1h-3zM335 75h1v1h-1zM335 77h1v1h-1zM336 78h1v8h-1zM337 86h1v8h-1zM337 94h2v1h-2zM338 95h1v5h-1zM339 82h1v12h-1zM340 75h1v7h-1zM341 74h2v1h-2zM343 73h2v1h-2zM345 74h2v1h-2zM347 73h2v1h-2zM349 72h2v1h-2zM350 73h1v3h-1zM351 76h1v8h-1zM352 84h2v1h-2zM352 85h2v1h-2zM352 86h2v1h-2zM352 87h2v1h-2zM352 88h2v1h-2zM352 89h2v1h-2zM352 90h2v1h-2zM352 91h2v1h-2zM353 92h1v4h-1zM354 72h1v12h-1zM355 71h2v1h-2zM357 70h2v1h-2zM359 69h2v1h-2zM361 70h2v1h-2zM363 71h1v6h-1zM364 77h1v11h-1zM364 88h2v1h-2zM365 89h1v6h-1zM366 76h1v12h-1zM367 69h1v7h-1zM368 68h2v1h-2zM370 67h7v1h-7zM376 66h1v1h-1zM376 68h1v22h-1zM377 90h2v1h-2zM377 91h2v1h-2zM377 92h2v1h-2zM377 93h2v1h-2zM377 94h2v1h-2zM377 95h2v1h-2zM377 96h2v1h-2zM377 97h2v1h-2zM377 98h2v1h-2zM377 99h2v1h-2zM377 100h2v1h-2zM377 101h2v1h-2zM377 102h1v12h-1zM378 78h1v12h-1zM379 66h2v1h-2zM379 67h1v11h-1zM381 65h4v1h-4zM385 64h3v1h-3zM387 65h1v3h-1zM388 68h1v8h-1zM389 76h1v7h-1zM389 83h2v1h-2zM390 84h1v5h-1zM391 71h1v12h-1zM392 64h1v7h-1zM393 63h2v1h-2zM395 62h2v1h-2zM397 63h2v1h-2zM399 62h3v1h-3zM401 61h1v1h-1zM401 63h1v2h-1zM402 65h1v7h-1zM403 72h1v21h-1zM404 93h2v1h-2zM404 94h2v1h-2zM404 95h2v1h-2zM404 96h2v1h-2zM404 97h2v1h-2zM404 98h2v1h-2zM404 99h2v1h-2zM404 100h1v12h-1zM405 76h1v17h-1zM406 62h1v14h-1zM407 60h2v1h-2zM407 61h1v1h-1zM409 61h2v1h-2zM411 60h2v1h-2zM413 59h3v1h-3zM415 58h1v1h-1zM415 60h1v5h-1zM416 65h1v26h-1zM417 91h2v1h-2zM417 92h2v1h-2zM417 93h2v1h-2zM417 94h2v1h-2zM417 95h2v1h-2zM417 96h2v1h-2zM417 97h2v1h-2zM417 98h1v13h-1zM418 73h1v18h-1zM419 60h1v13h-1zM420 58h1v2h-1zM421 57h1v1h-1zM422 58h2v1h-2zM424 59h1v1h-1zM425 58h1v1h-1zM426 57h3v1h-3zM428 56h1v1h-1zM428 58h1v24h-1zM429 82h2v1h-2zM429 83h2v1h-2zM429 84h2v1h-2zM429 85h2v1h-2zM429 86h2v1h-2zM429 87h2v1h-2zM429 88h2v1h-2zM429 89h2v1h-2zM429 90h2v1h-2zM429 91h2v1h-2zM429 92h2v1h-2zM429 93h2v1h-2zM429 94h2v1h-2zM429 95h2v1h-2zM429 96h2v1h-2zM429 97h2v1h-2zM429 98h2v1h-2zM429 99h1v10h-1zM430 81h1v1h-1zM431 64h1v17h-1zM432 56h2v1h-2zM432 57h1v7h-1zM434 55h3v1h-3zM437 54h4v1h-4zM440 55h1v12h-1zM441 67h1v26h-1zM442 93h2v1h-2zM442 94h2v1h-2zM442 95h2v1h-2zM442 96h2v1h-2zM442 97h1v10h-1zM443 77h1v16h-1zM444 60h1v17h-1zM445 53h2v1h-2zM445 54h1v6h-1zM447 52h3v1h-3zM450 53h3v1h-3zM452 51h1v2h-1zM452 54h1v1h-1z"/>
</g>
<rect x="453" y="2" width="1" height="258" fill="#ff0000"/>
</svg>
<div class="a " style="left:10.4px;top:79px;transform-origin:0.0px 0;transform:scaleX(0.983);">20 X</div>
<div class="a " style="left:10.4px;top:131px;transform-origin:0.0px 0;transform:scaleX(0.983);">16 X</div>
<div class="a " style="left:10.4px;top:183px;transform-origin:0.0px 0;transform:scaleX(0.983);">12 X</div>
<div class="a " style="left:17.1px;top:234px;transform-origin:0.0px 0;transform:scaleX(0.978);">8 X</div>
<div class="a " style="left:17.1px;top:286px;transform-origin:0.0px 0;transform:scaleX(0.978);">4 X</div>
<div class="a " style="left:513.0px;top:105px;transform-origin:0.0px 0;transform:scaleX(0.856);">24</div>
<div class="a " style="left:513.0px;top:143px;transform-origin:0.0px 0;transform:scaleX(0.856);">20</div>
<div class="a " style="left:513.0px;top:182px;transform-origin:0.0px 0;transform:scaleX(0.856);">16</div>
<div class="a " style="left:513.0px;top:220px;transform-origin:0.0px 0;transform:scaleX(0.856);">12</div>
<div class="a " style="left:513.0px;top:258px;">8</div>
<div class="a " style="left:513.0px;top:297px;">4</div>
<div class="a " style="left:35.7px;top:350px;transform-origin:0.0px 0;transform:scaleX(0.869);">0.0</div>
<div class="a " style="left:87.7px;top:350px;transform-origin:0.0px 0;transform:scaleX(0.869);">0.5</div>
<div class="a " style="left:139.7px;top:350px;transform-origin:0.0px 0;transform:scaleX(0.869);">1.0</div>
<div class="a " style="left:191.7px;top:350px;transform-origin:0.0px 0;transform:scaleX(0.869);">1.5</div>
<div class="a " style="left:243.7px;top:350px;transform-origin:0.0px 0;transform:scaleX(0.869);">2.0</div>
<div class="a " style="left:295.7px;top:350px;transform-origin:0.0px 0;transform:scaleX(0.869);">2.5</div>
<div class="a " style="left:347.7px;top:350px;transform-origin:0.0px 0;transform:scaleX(0.869);">3.0</div>
<div class="a " style="left:399.7px;top:350px;transform-origin:0.0px 0;transform:scaleX(0.869);">3.5</div>
<div class="a " style="left:451.7px;top:350px;transform-origin:0.0px 0;transform:scaleX(0.869);">4.0</div>
<div class="a " style="left:503.7px;top:350px;transform-origin:0.0px 0;transform:scaleX(0.869);">4.5</div>
<div class="box" style="left:2px;top:370px;width:525px;height:11px;border-top:1px solid #808080;border-left:1px solid #808080;border-right:1px solid #c4c4c4;border-bottom:1px solid #c4c4c4;"></div>
<div class="box" style="left:4px;top:372px;width:521px;height:7px;background:#000"></div>
<div class="box" style="left:2px;top:383px;width:525px;height:55px;border-top:1px solid #808080;border-left:1px solid #808080;border-right:1px solid #c4c4c4;border-bottom:1px solid #c4c4c4;"></div><div class="box" style="left:3px;top:384px;width:523px;height:53px;border-top:1px solid #000;border-left:1px solid #000;border-right:1px solid #c4c4c4;border-bottom:1px solid #c4c4c4;"></div>
<div class="a " style="left:22.4px;top:387px;transform-origin:0.0px 0;transform:scaleX(0.882);">[18:27:14]</div>
<div class="a " style="left:79.5px;top:387px;transform-origin:0.0px 0;transform:scaleX(0.956);">Creating Data Disc</div>
<div class="a " style="left:22.4px;top:403px;transform-origin:0.0px 0;transform:scaleX(0.882);">[18:32:56]</div>
<div class="a " style="left:79.5px;top:403px;transform-origin:0.0px 0;transform:scaleX(0.953);">Speed:6-16 X CAV (11.78 X average)</div>
<div class="a " style="left:22.4px;top:419px;transform-origin:0.0px 0;transform:scaleX(0.882);">[18:32:56]</div>
<div class="a " style="left:79.5px;top:419px;transform-origin:0.0px 0;transform:scaleX(0.936);">Elapsed Time:&nbsp; 5:42</div>
<svg class="a" style="left:7px;top:386px" width="14" height="14" viewBox="0 0 14 14"><path d="M5.4 9.2 L7.9 12.7 L9.4 8.9z" fill="#fff" stroke="#202020" stroke-width="0.9"/><ellipse cx="6.9" cy="5.4" rx="5.5" ry="4.3" fill="#fff" stroke="#202020" stroke-width="0.9"/><path d="M6 9.2 L7.9 11.6 L8.9 9z" fill="#fff"/><path d="M11.3 4 C11.7 6.2 10.6 7.9 8.9 8.6" fill="none" stroke="#c8c8c8" stroke-width="0.8"/><rect x="6" y="2.9" width="1.7" height="1.3" fill="#0000ff"/><rect x="5.9" y="5.3" width="1.9" height="2.8" fill="#0000ff"/></svg>
<div class="box" style="left:508px;top:385px;width:17px;height:52px;background:#e2e2e2"></div>
<div class="box" style="left:508px;top:385px;width:17px;height:16px;border-top:1px solid #c4c4c4;border-left:1px solid #c4c4c4;border-right:1px solid #000;border-bottom:1px solid #000;background:#fff"></div><div class="box" style="left:509px;top:386px;width:15px;height:14px;border-right:1px solid #808080;border-bottom:1px solid #808080;"></div>
<svg class="a" style="left:512.5px;top:391px" width="8" height="5"><path d="M0.2 4.3h7.6l-3.8 -4z" fill="#000"/></svg>
<div class="box" style="left:508px;top:412px;width:17px;height:7px;border-top:1px solid #c4c4c4;border-left:1px solid #c4c4c4;border-right:1px solid #000;border-bottom:1px solid #000;background:#fff"></div><div class="box" style="left:509px;top:413px;width:15px;height:5px;border-right:1px solid #808080;border-bottom:1px solid #808080;"></div>
<div class="box" style="left:508px;top:419px;width:17px;height:17px;border-top:1px solid #c4c4c4;border-left:1px solid #c4c4c4;border-right:1px solid #000;border-bottom:1px solid #000;background:#fff"></div><div class="box" style="left:509px;top:420px;width:15px;height:15px;border-right:1px solid #808080;border-bottom:1px solid #808080;"></div>
<svg class="a" style="left:512.5px;top:427.0px" width="8" height="5"><path d="M0.2 0.3h7.6l-3.8 4z" fill="#000"/></svg>
<div class="grp" style="left:536px;top:79px;width:185px;height:52px"></div><div class="box" style="left:542.3px;top:77px;width:51.200000000000045px;height:5px;background:#fff"></div><div class="a " style="left:544.9px;top:74px;letter-spacing:0.02px;">Disc info</div>
<div class="a " style="left:545.5px;top:86px;transform-origin:0.0px 0;transform:scaleX(0.932);">Type:</div>
<div class="a b" style="left:606.2px;top:86px;transform-origin:0.0px 0;transform:scaleX(0.928);">DVD+R</div>
<div class="a " style="left:545.5px;top:101px;transform-origin:0.0px 0;transform:scaleX(0.846);">ID:</div>
<div class="a b" style="left:606.2px;top:101px;transform-origin:0.0px 0;transform:scaleX(0.897);">PRODISC R04</div>
<div class="a " style="left:545.5px;top:115px;transform-origin:0.0px 0;transform:scaleX(0.908);">Length:</div>
<div class="a b" style="left:606.2px;top:115px;transform-origin:0.0px 0;transform:scaleX(0.892);">4.38 GB</div>
<div class="grp" style="left:536px;top:137px;width:185px;height:64px"></div><div class="box" style="left:542.4px;top:135px;width:45.89999999999998px;height:5px;background:#fff"></div><div class="a " style="left:545.0px;top:132px;transform-origin:0.0px 0;transform:scaleX(0.942);">Settings</div>
<div class="a " style="left:545.1px;top:146px;transform-origin:0.0px 0;transform:scaleX(0.911);">Speed</div>
<div class="box" style="left:643px;top:145px;width:69px;height:19px;border-top:1px solid #808080;border-left:1px solid #808080;border-right:1px solid #c4c4c4;border-bottom:1px solid #c4c4c4;"></div><div class="box" style="left:644px;top:146px;width:67px;height:17px;border-top:1px solid #000;border-left:1px solid #000;border-right:1px solid #c4c4c4;border-bottom:1px solid #c4c4c4;"></div>
<div class="a " style="left:646.0px;top:148px;transform-origin:0.0px 0;transform:scaleX(0.946);">16.0 X</div>
<div class="box" style="left:694px;top:147px;width:16px;height:15px;border-top:2px solid #c4c4c4;border-left:2px solid #c4c4c4;border-right:1px solid #000;border-bottom:1px solid #000;background:#fff"></div><div class="box" style="left:695px;top:148px;width:14px;height:13px;border-right:1px solid #808080;border-bottom:1px solid #808080;"></div>
<svg class="a" style="left:698px;top:152.5px" width="8" height="5"><path d="M0.2 0.3h7.6l-3.8 4z" fill="#000"/></svg>
<div class="chk" style="left:546px;top:165px"><i></i></div>
<div class="a " style="left:564.2px;top:165px;transform-origin:0.0px 0;transform:scaleX(0.938);">Burn image</div>
<div class="chk" style="left:546px;top:182px"><i></i></div>
<div class="a " style="left:564.2px;top:182px;transform-origin:0.0px 0;transform:scaleX(0.919);">Simulate</div>
<div class="grp" style="left:536px;top:208px;width:185px;height:70px"></div><div class="box" style="left:542.4px;top:206px;width:35.60000000000002px;height:5px;background:#fff"></div><div class="a " style="left:545.0px;top:202px;transform-origin:0.0px 0;transform:scaleX(0.879);">Speed</div>
<div class="a " style="left:558.5px;top:214px;transform-origin:0.0px 0;transform:scaleX(0.923);">Average</div>
<div class="a " style="left:662.8px;top:214px;transform-origin:0.0px 0;transform:scaleX(0.932);">Type:</div>
<div class="lcd" style="left:546px;top:227px;width:68px;height:16px"></div>
<div class="lcd" style="left:643px;top:227px;width:68px;height:16px"></div>
<div class="a c" style="left:560.3px;top:228px;font-weight:bold;transform-origin:0.0px 0;transform:scaleX(1.069);">11.78x</div>
<div class="a c" style="left:662.3px;top:228px;font-weight:bold;transform-origin:0.0px 0;transform:scaleX(1.172);">CAV</div>
<div class="a " style="left:565.5px;top:243px;transform-origin:0.0px 0;transform:scaleX(0.952);">Start:</div>
<div class="a " style="left:666.2px;top:243px;transform-origin:0.0px 0;transform:scaleX(0.845);">End:</div>
<div class="lcd" style="left:546px;top:257px;width:68px;height:16px"></div>
<div class="lcd" style="left:643px;top:257px;width:68px;height:16px"></div>
<div class="a c" style="left:562.9px;top:258px;font-weight:bold;transform-origin:0.0px 0;transform:scaleX(1.067);">5.96x</div>
<div class="a c" style="left:656.3px;top:258px;font-weight:bold;transform-origin:0.0px 0;transform:scaleX(1.065);">16.13x</div>
<div class="grp" style="left:536px;top:284px;width:185px;height:50px"></div><div class="box" style="left:542.9px;top:282px;width:35.60000000000002px;height:5px;background:#fff"></div><div class="a " style="left:545.5px;top:279px;transform-origin:0.0px 0;transform:scaleX(0.959);">Buffer</div>
<div class="box" style="left:546px;top:292px;width:130px;height:9px;border-top:1px solid #808080;border-left:1px solid #808080;border-right:1px solid #c4c4c4;border-bottom:1px solid #c4c4c4;"></div>
<div class="box" style="left:548px;top:294px;width:102px;height:5px;background:#000"></div>
<div class="a b" style="left:682.8px;top:289px;transform-origin:0.0px 0;transform:scaleX(0.775);">81%</div>
<div class="a b" style="left:547.3px;top:301px;transform-origin:0.0px 0;transform:scaleX(0.911);">48 - 100% (91% avg)</div>
<div class="box" style="left:546px;top:317px;width:16px;height:12px;background:#804080;border:1px solid #000"></div>
<div class="chk" style="left:576px;top:318px"><i></i></div><svg class="a" style="left:578px;top:320px" width="9" height="9" viewBox="0 0 9 9"><path d="M1 3v2.6l2 2 4.5-4.5v-2.6l-4.5 4.5z" fill="#000"/></svg>
<div class="a " style="left:593.2px;top:318px;transform-origin:0.0px 0;transform:scaleX(0.919);">Show graph</div>
<div class="grp" style="left:536px;top:343px;width:185px;height:50px"></div><div class="box" style="left:542.9px;top:341px;width:63.10000000000002px;height:5px;background:#fff"></div><div class="a " style="left:545.5px;top:338px;transform-origin:0.0px 0;transform:scaleX(0.915);">CPU Usage</div>
<div class="box" style="left:546px;top:350px;width:130px;height:9px;border-top:1px solid #808080;border-left:1px solid #808080;border-right:1px solid #c4c4c4;border-bottom:1px solid #c4c4c4;"></div>
<div class="box" style="left:548px;top:352px;width:8px;height:5px;background:#000"></div>
<div class="a b" style="left:683.6px;top:349px;transform-origin:0.0px 0;transform:scaleX(0.684);">7%</div>
<div class="a b" style="left:547.3px;top:361px;transform-origin:0.0px 0;transform:scaleX(0.914);">2 - 35% (9% avg)</div>
<div class="box" style="left:546px;top:376px;width:16px;height:12px;background:#408080;border:1px solid #000"></div>
<div class="chk" style="left:576px;top:377px"><i></i></div><svg class="a" style="left:578px;top:379px" width="9" height="9" viewBox="0 0 9 9"><path d="M1 3v2.6l2 2 4.5-4.5v-2.6l-4.5 4.5z" fill="#000"/></svg>
<div class="a " style="left:593.2px;top:377px;transform-origin:0.0px 0;transform:scaleX(0.919);">Show graph</div>
<div class="grp" style="left:536px;top:401px;width:185px;height:37px"></div><div class="box" style="left:542.9px;top:399px;width:49.30000000000007px;height:5px;background:#fff"></div><div class="a " style="left:545.5px;top:396px;transform-origin:0.0px 0;transform:scaleX(0.921);">Progress</div>
<div class="a " style="left:546.0px;top:409px;transform-origin:0.0px 0;transform:scaleX(0.938);">Position:</div>
<div class="a b" style="left:617.4px;top:409px;transform-origin:0.0px 0;transform:scaleX(0.950);">4459 MB</div>
<div class="a " style="left:546.0px;top:424px;transform-origin:0.0px 0;transform:scaleX(0.893);">Elapsed:</div>
<div class="a b" style="left:617.4px;top:424px;transform-origin:0.0px 0;transform:scaleX(0.872);">5:42</div>
</body></html>
